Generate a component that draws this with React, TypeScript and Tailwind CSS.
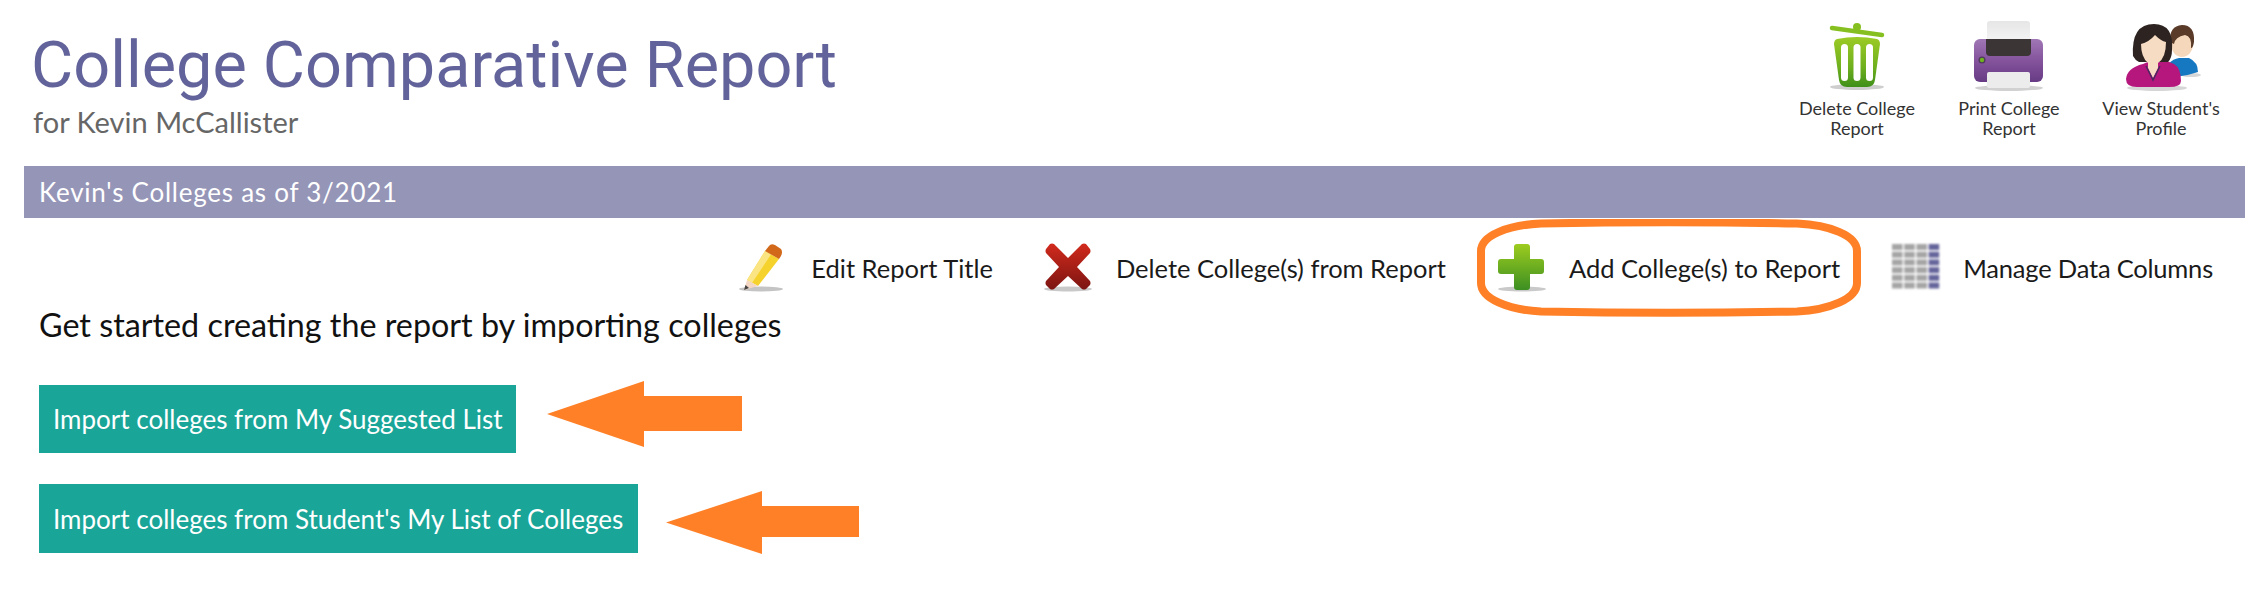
const TOP_ACTIONS = [
  { label: ['Delete College', 'Report'], icon: <TrashIcon />, width: 'w-[152px]' },
  { label: ['Print College', 'Report'], icon: <PrinterIcon />, width: 'w-[152px]' },
  { label: ["View Student's", 'Profile'], icon: <PeopleIcon />, width: 'w-[152px]' },
];

function TrashIcon() {
  return (
    <svg width="60" height="72" viewBox="0 0 60 72" className="blur-[0.5px]" aria-hidden>
      <defs>
        <linearGradient id="trashG" x1="0" y1="0" x2="0" y2="1">
          <stop offset="0" stopColor="#9ccb25" />
          <stop offset="0.6" stopColor="#6fb01e" />
          <stop offset="1" stopColor="#3f8f1a" />
        </linearGradient>
      </defs>
      <ellipse cx="30" cy="67" rx="27" ry="3" fill="#b9b9b9" opacity="0.7" />
      <path d="M5 8 L55 15" stroke="#86bf20" strokeWidth="4.5" strokeLinecap="round" />
      <circle cx="30" cy="7" r="4" fill="#86bf20" />
      <path d="M10 19 Q30 15 50 19 Q53 20 53 24 L48 60 Q47 67 40 67 L20 67 Q13 67 12 60 L7 24 Q7 20 10 19 Z" fill="url(#trashG)" />
      <rect x="14" y="24" width="7" height="37" rx="3.5" fill="#fff" />
      <rect x="26.5" y="24" width="7" height="37" rx="3.5" fill="#fff" />
      <rect x="39" y="24" width="7" height="37" rx="3.5" fill="#fff" />
    </svg>
  );
}

function PrinterIcon() {
  return (
    <svg width="70" height="72" viewBox="0 0 70 72" className="blur-[0.5px]" aria-hidden>
      <defs>
        <linearGradient id="printG" x1="0" y1="0" x2="0" y2="1">
          <stop offset="0" stopColor="#a077b5" />
          <stop offset="0.5" stopColor="#84539c" />
          <stop offset="1" stopColor="#673c85" />
        </linearGradient>
        <linearGradient id="paperG" x1="0" y1="0" x2="0" y2="1">
          <stop offset="0" stopColor="#e6e6e6" />
          <stop offset="1" stopColor="#f6f6f6" />
        </linearGradient>
      </defs>
      <ellipse cx="35" cy="68" rx="34" ry="3" fill="#bdbdbd" opacity="0.7" />
      <rect x="13" y="1" width="43" height="24" rx="3" fill="url(#paperG)" />
      <rect x="0" y="19" width="69" height="43" rx="6" fill="url(#printG)" />
      <path d="M12 19 L57 19 L57 32 Q57 36 53 36 L16 36 Q12 36 12 32 Z" fill="#3b3536" />
      <circle cx="8" cy="40" r="3.5" fill="#4f3a5c" />
      <circle cx="8" cy="40" r="2.2" fill="#6fb41f" />
      <rect x="13" y="52" width="43" height="16" rx="2" fill="#ececec" />
    </svg>
  );
}

function PeopleIcon() {
  return (
    <svg width="76" height="70" viewBox="0 0 76 70" className="ml-[3px] blur-[0.5px]" aria-hidden>
      <ellipse cx="32" cy="66" rx="30" ry="3" fill="#c4c4c4" opacity="0.7" />
      <ellipse cx="66" cy="53" rx="10" ry="2" fill="#c4c4c4" opacity="0.7" />
      <path d="M40 52 Q42 38 54 36 L64 36 Q73 40 73 50 Q62 54 50 55 Z" fill="#1778c2" />
      <ellipse cx="57" cy="22" rx="11" ry="13" fill="#f5d8bb" />
      <path d="M45 20 Q44 4 57 3 Q70 3 69 20 Q68 26 66 26 Q67 14 60 13 Q50 15 49 22 Z" fill="#5a3a28" />
      <path d="M1 57 Q2 46 18 42 L25 39 L42 39 L49 42 Q56 46 56 59 Q56 65 44 65 L12 65 Q1 65 1 57 Z" fill="#b5177d" />
      <path d="M8 34 Q6 2 29 2 Q49 2 47 28 Q47 36 43 40 L14 40 Q10 38 8 34 Z" fill="#2d2421" />
      <path d="M16 22 Q24 20 30 13 Q36 19 41 20 Q41 36 33 41 L33 46 L28 56 L23 46 L23 41 Q16 35 16 22 Z" fill="#f6dcc2" />
      <path d="M21 44 L28 58 L35 44" fill="none" stroke="#4b2a5f" strokeWidth="1.5" />
    </svg>
  );
}

function PencilIcon() {
  return (
    <svg width="46" height="50" viewBox="0 0 46 50" className="blur-[0.4px]" aria-hidden>
      <ellipse cx="23" cy="46" rx="22" ry="2.5" fill="#c4c4c4" />
      <path d="M27 8 L41 16 L20 43 L9 37 Z" fill="#f5d22c" />
      <path d="M27 8 L33 11.5 L14 40 L9 37 Z" fill="#fbe583" />
      <path d="M31 3 Q33 0 37 2 L43 6 Q45 9 43 13 L41 16 L27 8 Z" fill="#d2691a" />
      <path d="M9 37 L20 43 L6 47 Z" fill="#f3d6c4" />
      <path d="M7.5 42 L11 45 L6 47 Z" fill="#444" />
    </svg>
  );
}

function CrossIcon() {
  return (
    <svg width="50" height="50" viewBox="0 0 50 50" className="blur-[0.4px]" aria-hidden>
      <defs>
        <linearGradient id="crossG" x1="0" y1="0" x2="0" y2="1">
          <stop offset="0" stopColor="#d22a1c" />
          <stop offset="1" stopColor="#7c1512" />
        </linearGradient>
      </defs>
      <ellipse cx="25" cy="46" rx="24" ry="2.5" fill="#c9c9c9" />
      <path d="M3 6 L7 1 Q9 0 11 1 L25 15 L39 1 Q41 0 43 1 L47 6 Q48 8 47 10 L34 24 L47 38 Q48 40 47 42 L43 46 Q41 47 39 46 L25 33 L11 46 Q9 47 7 46 L3 42 Q2 40 3 38 L16 24 L3 10 Q2 8 3 6 Z" fill="url(#crossG)" />
    </svg>
  );
}

function PlusIcon() {
  return (
    <svg width="50" height="50" viewBox="0 0 50 50" className="blur-[0.4px]" aria-hidden>
      <defs>
        <linearGradient id="plusG" x1="0" y1="0" x2="0" y2="1">
          <stop offset="0" stopColor="#9dcc1f" />
          <stop offset="1" stopColor="#3c8f22" />
        </linearGradient>
      </defs>
      <ellipse cx="25" cy="46" rx="24" ry="2.5" fill="#c9c9c9" />
      <path d="M20 1 L30 1 Q33 1 33 4 L33 16 L44 16 Q47 16 47 19 L47 28 Q47 31 44 31 L33 31 L33 44 Q33 47 30 47 L20 47 Q17 47 17 44 L17 31 L4 31 Q1 31 1 28 L1 19 Q1 16 4 16 L17 16 L17 4 Q17 1 20 1 Z" fill="url(#plusG)" />
    </svg>
  );
}

function GridIcon() {
  const rows = [0, 1, 2, 3, 4, 5];
  const cols = [0, 1, 2, 3];
  return (
    <svg width="50" height="50" viewBox="0 0 50 50" className="blur-[0.8px]" aria-hidden>
      {rows.map((r) =>
        cols.map((c) => (
          <rect
            key={`${r}-${c}`}
            x={1 + c * 12.2}
            y={1 + r * 7.7}
            width="10.6"
            height="6"
            fill={c === 3 ? '#66659b' : '#a5a5a5'}
          />
        )),
      )}
    </svg>
  );
}

function ToolbarItem({ icon, label, gap, tracking = '' }: { icon: React.ReactNode; label: string; gap: string; tracking?: string }) {
  return (
    <div className={`flex items-center ${gap}`}>
      {icon}
      <span className={`text-[25.5px] text-[#1a1a1a] whitespace-nowrap ${tracking}`}>{label}</span>
    </div>
  );
}

function LeftArrow({ width, height, shaftTop, shaftBottom, head, className }: { width: number; height: number; shaftTop: number; shaftBottom: number; head: number; className: string }) {
  return (
    <svg width={width} height={height} viewBox={`0 0 ${width} ${height}`} className={className} aria-hidden>
      <path
        d={`M0 ${height / 2} L${head} 0 L${head} ${shaftTop} L${width} ${shaftTop} L${width} ${shaftBottom} L${head} ${shaftBottom} L${head} ${height} Z`}
        fill="#ff8027"
      />
    </svg>
  );
}

export default function App() {
  return (
    <div className="w-[2254px] h-[602px] overflow-hidden bg-white pl-[24px] pr-[9px] font-[Lato,sans-serif]">
      {/* Header */}
      <div className="flex h-[166px] items-start justify-between">
        <div className="pl-[7px] pt-[27px]">
          <h1 className="font-[Roboto,sans-serif] text-[64.8px] leading-[76px] text-[#63639b] whitespace-nowrap">College Comparative Report</h1>
          <p className="pl-[2px] pt-[2px] text-[29px] leading-[34px] text-[#666666]">for Kevin McCallister</p>
        </div>
        <div className="flex pr-[8px] pt-[18px]">
          {TOP_ACTIONS.map((a) => (
            <div key={a.label[0]} className={`flex flex-col items-center ${a.width}`}>
              <div className="flex h-[74px] items-end justify-center">{a.icon}</div>
              <div className="mt-[6px] text-center text-[18px] leading-[20px] text-[#333333]">
                {a.label[0]}
                <br />
                {a.label[1]}
              </div>
            </div>
          ))}
        </div>
      </div>

      {/* Section bar */}
      <div className="flex h-[52px] items-center bg-[#9595b7] pl-[15px] text-[26px] tracking-[0.75px] text-white">
        Kevin's Colleges as of 3/2021
      </div>

      {/* Toolbar */}
      <div className="flex h-[90px] items-center justify-end pr-[32px] pt-[10px]">
        <ToolbarItem icon={<PencilIcon />} label="Edit Report Title" gap="gap-[27px]" />
        <div className="w-[50px]" />
        <ToolbarItem icon={<CrossIcon />} label="Delete College(s) from Report" gap="gap-[23px]" />
        <div className="w-[51px]" />
        <div className="relative">
          <ToolbarItem icon={<PlusIcon />} label="Add College(s) to Report" gap="gap-[22px]" />
          <svg width="384" height="98" viewBox="0 0 384 98" className="absolute left-[-20px] top-[-24px]" aria-hidden>
            <path
              d="M4 32 C4 16 32 6 64 4.5 Q192 2 320 4.5 C352 6 380 16 380 32 L380 64 C380 80 352 91 320 92.5 Q192 95 64 92.5 C32 91 4 80 4 64 Z"
              fill="none"
              stroke="#ff8027"
              strokeWidth="8"
            />
          </svg>
        </div>
        <div className="w-[51px]" />
        <ToolbarItem icon={<GridIcon />} label="Manage Data Columns" gap="gap-[22px]" tracking="tracking-[-0.2px]" />
      </div>

      {/* Import prompt */}
      <div className="pl-[15px]">
        <p className="-mt-[1px] mb-[1px] text-[32.3px] leading-[36px] text-[#111111]">Get started creating the report by importing colleges</p>
        <div className="mt-[42px] flex items-center gap-[31px]">
          <button className="flex h-[68px] w-[477px] items-center bg-[#19a598] pl-[14px] pt-[1px] text-[26px] text-white">Import colleges from My Suggested List</button>
          <LeftArrow width={195} height={66} shaftTop={15} shaftBottom={50} head={97} className="-mt-[10px]" />
        </div>
        <div className="mt-[31px] flex items-center gap-[28px]">
          <button className="flex h-[69px] w-[599px] items-center bg-[#19a598] pl-[14px] pt-[1px] text-[26px] text-white">Import colleges from Student's My List of Colleges</button>
          <LeftArrow width={193} height={63} shaftTop={15} shaftBottom={46} head={96} className="-mb-[8px]" />
        </div>
      </div>
    </div>
  );
}
